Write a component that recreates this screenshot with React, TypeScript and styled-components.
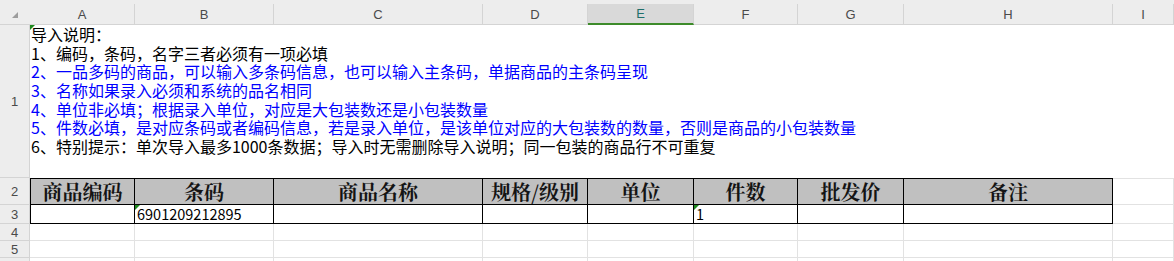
import React from 'react'
import styled, { createGlobalStyle, css } from 'styled-components'

//Sheet geometry (each width includes the cell's right border pixel)
const columns = [
    { key: 'A', width: 105 },
    { key: 'B', width: 139 },
    { key: 'C', width: 209 },
    { key: 'D', width: 105 },
    { key: 'E', width: 106 },
    { key: 'F', width: 104 },
    { key: 'G', width: 106 },
    { key: 'H', width: 209 },
    { key: 'I', width: 61 },
]

const selectedColumn = 'E'

const notes = [
    { text: '导入说明：', blue: false },
    { text: '1、编码，条码，名字三者必须有一项必填', blue: false },
    { text: '2、一品多码的商品，可以输入多条码信息，也可以输入主条码，单据商品的主条码呈现', blue: true },
    { text: '3、名称如果录入必须和系统的品名相同', blue: true },
    { text: '4、单位非必填；根据录入单位，对应是大包装数还是小包装数量', blue: true },
    { text: '5、件数必填，是对应条码或者编码信息，若是录入单位，是该单位对应的大包装数的数量，否则是商品的小包装数量', blue: true },
    { text: '6、特别提示：单次导入最多1000条数据；导入时无需删除导入说明；同一包装的商品行不可重复', blue: false },
]

const titles = ['商品编码', '条码', '商品名称', '规格/级别', '单位', '件数', '批发价', '备注']

//Row 3 values, keyed by column
const firstRow: Record<string, string> = { B: '6901209212895', F: '1' }

const GRID = '#e2e2e2'
const HEAD_LINE = '#d4d4d4'

const App: React.FC = () => {
    return (
        <>
            <GlobalStyle />
            <Sheet>
                <Corner>
                    <svg width="6" height="6" viewBox="0 0 6 6">
                        <polygon points="6,0 6,6 0,6" fill="#9d9d9d" />
                    </svg>
                </Corner>
                {columns.map((col) => (
                    <ColHeader key={col.key}>
                        <ColLabel $selected={col.key === selectedColumn}>{col.key}</ColLabel>
                    </ColHeader>
                ))}

                {/* Row 1 : merged notes */}
                <RowHeader>1</RowHeader>
                <NoteCell>
                    <Mark />
                    {notes.map((note, index) => (
                        <NoteLine key={index} $blue={note.blue}>
                            {note.text}
                        </NoteLine>
                    ))}
                </NoteCell>

                {/* Row 2 : titles */}
                <RowHeader>2</RowHeader>
                {titles.map((title, index) => (
                    <TitleCell key={title} $first={index === 0}>
                        {title}
                    </TitleCell>
                ))}
                <PlainCell $topLine />

                {/* Row 3 : first record */}
                <RowHeader>3</RowHeader>
                {columns.slice(0, 8).map((col, index) => (
                    <DataCell key={col.key} $first={index === 0}>
                        {firstRow[col.key] && <Mark />}
                        {firstRow[col.key]}
                    </DataCell>
                ))}
                <PlainCell />

                {/* Empty rows */}
                {[4, 5, 6].map((row) => (
                    <React.Fragment key={row}>
                        <RowHeader>{row < 6 ? row : ''}</RowHeader>
                        {columns.map((col) => (
                            <PlainCell key={col.key} />
                        ))}
                    </React.Fragment>
                ))}
            </Sheet>
        </>
    )
}

export default App

const GlobalStyle = createGlobalStyle`
    html, body {
        margin: 0;
        padding: 0;
        background: #ffffff;
        overflow: hidden;
    }
    * {
        box-sizing: border-box;
    }
`

const Sheet = styled.div`
    display: grid;
    grid-template-columns: 30px ${columns.map((c) => c.width + 'px').join(' ')};
    grid-template-rows: 25px 153px 27px 19px 17px 17px 17px;
    width: 1174px;
    height: 261px;
    overflow: hidden;
    font-family: 'Noto Sans CJK SC', 'Liberation Sans', sans-serif;
    color: #000000;
`

const Corner = styled.div`
    display: flex;
    align-items: flex-start;
    justify-content: flex-end;
    padding: 12px 12px 0 0;
    background: #ededed;
    border-bottom: 1px solid ${HEAD_LINE};
`

const ColHeader = styled.div`
    display: flex;
    padding-top: 4px;
    background: #ededed;
`

const ColLabel = styled.div<{ $selected?: boolean }>`
    flex: 1;
    display: flex;
    align-items: center;
    justify-content: center;
    font-family: 'Liberation Sans', Arial, sans-serif;
    font-size: 13px;
    color: #4a4a4a;
    border-right: 1px solid ${HEAD_LINE};
    border-bottom: 1px solid ${HEAD_LINE};
    ${(p) =>
        p.$selected &&
        css`
            background: #d9d9d9;
            color: #1f6f6a;
            border-bottom: 2px solid #3d8b2a;
        `}
`

const RowHeader = styled.div`
    display: flex;
    align-items: center;
    justify-content: center;
    background: #ededed;
    border-right: 1px solid ${HEAD_LINE};
    border-bottom: 1px solid ${HEAD_LINE};
    font-family: 'Liberation Sans', Arial, sans-serif;
    font-size: 13px;
    color: #4a4a4a;
`

const NoteCell = styled.div`
    position: relative;
    grid-column: 2 / span 9;
    padding: 0 0 0 1px;
    font-size: 16px;
    line-height: 18.67px;
    white-space: nowrap;
`

const NoteLine = styled.div<{ $blue?: boolean }>`
    height: 18.67px;
    color: ${(p) => (p.$blue ? '#0000ff' : '#000000')};
`

const Mark = styled.span`
    position: absolute;
    top: 0;
    left: 0;
    width: 0;
    height: 0;
    border-top: 5px solid #1f8a1f;
    border-right: 5px solid transparent;
`

const boxed = css<{ $first?: boolean }>`
    border-right: 1px solid #000000;
    border-bottom: 1px solid #000000;
    ${(p) =>
        p.$first &&
        css`
            border-left: 1px solid #000000;
        `}
`

const TitleCell = styled.div<{ $first?: boolean }>`
    ${boxed};
    display: flex;
    align-items: center;
    justify-content: center;
    border-top: 1px solid #000000;
    background: #c0c0c0;
    font-family: 'Noto Serif CJK SC', 'Noto Sans CJK SC', serif;
    font-size: 20px;
    font-weight: 700;
    color: #141414;
    white-space: nowrap;
`

const DataCell = styled.div<{ $first?: boolean }>`
    ${boxed};
    position: relative;
    display: flex;
    align-items: center;
    padding-left: 2px;
    font-size: 14.5px;
    line-height: 18px;
`

const PlainCell = styled.div<{ $topLine?: boolean }>`
    border-right: 1px solid ${GRID};
    border-bottom: 1px solid ${GRID};
    ${(p) =>
        p.$topLine &&
        css`
            border-top: 1px solid ${GRID};
        `}
`
